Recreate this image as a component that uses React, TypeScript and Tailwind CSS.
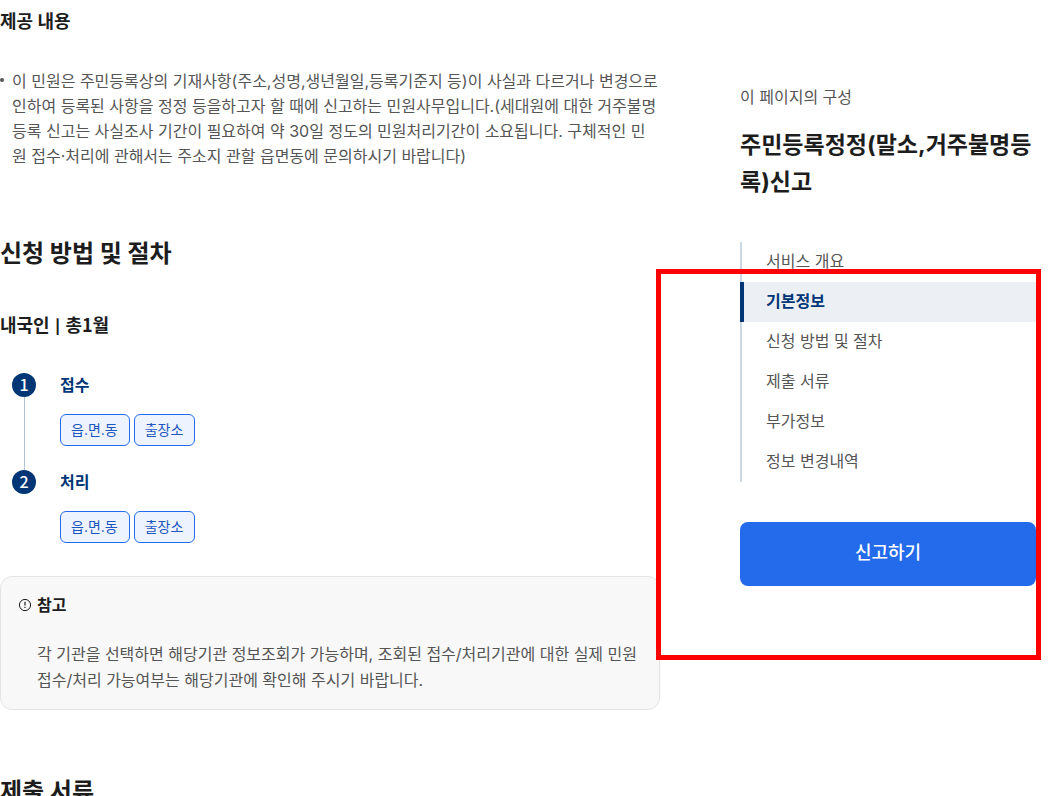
import clsx from "clsx";

type Step = { id: number; title: string; places: string[] };

const STEPS: Step[] = [
  { id: 1, title: "접수", places: ["읍.면.동", "출장소"] },
  { id: 2, title: "처리", places: ["읍.면.동", "출장소"] },
];

const SECTIONS = [
  "서비스 개요",
  "기본정보",
  "신청 방법 및 절차",
  "제출 서류",
  "부가정보",
  "정보 변경내역",
];

const ACTIVE_SECTION = "기본정보";

function InfoIcon() {
  return (
    <svg
      className="size-[14px] shrink-0"
      viewBox="0 0 14 14"
      fill="none"
      stroke="#1d1d1d"
      aria-hidden="true"
    >
      <circle cx="7" cy="7" r="5.6" strokeWidth="1" />
      <path d="M7 3.8v3.8" strokeWidth="1.2" />
      <path d="M7 8.7v1.3" strokeWidth="1.2" />
    </svg>
  );
}

function StepItem({ step, last }: { step: Step; last: boolean }) {
  return (
    <li className="flex gap-6">
      <div className="flex w-6 flex-col items-center">
        <span className="flex size-6 shrink-0 items-center justify-center rounded-full bg-[#003675] pb-0.5 font-['Noto_Sans_CJK_KR',sans-serif] text-base leading-none font-medium text-white">
          {step.id}
        </span>
        {!last && <span className="w-px flex-1 bg-[#b3c2d4]" />}
      </div>
      <div className={clsx(!last && "pb-6")}>
        <h4 className="text-base leading-6 font-bold text-[#003675]">
          {step.title}
        </h4>
        <div className="mt-[17px] flex gap-1">
          {step.places.map((place) => (
            <button
              key={place}
              type="button"
              className="h-8 rounded-md border border-[#246beb] bg-[#eef4ff] pr-[11px] pl-2.5 text-sm text-[#1d56bc]"
            >
              {place}
            </button>
          ))}
        </div>
      </div>
    </li>
  );
}

function SideNav() {
  return (
    <aside className="pt-[85px]">
      <p className="leading-6">이 페이지의 구성</p>
      <h2 className="mt-[18px] text-[23px] leading-[37px] font-bold break-all text-[#1d1d1d]">
        주민등록정정(말소,거주불명등록)신고
      </h2>
      <nav className="mt-[41px]" aria-label="이 페이지의 구성">
        <ul className="border-l-2 border-[#cdd7e4]">
          {SECTIONS.map((section) => (
            <li key={section}>
              <a
                href="#"
                className={clsx(
                  "block h-10 leading-[38px]",
                  section === ACTIVE_SECTION
                    ? "-ml-0.5 border-l-4 border-[#003675] bg-[#ecf0f5] pl-[22px] font-bold text-[#003675]"
                    : "pl-6"
                )}
              >
                {section}
              </a>
            </li>
          ))}
        </ul>
      </nav>
      <button
        type="button"
        className="mt-10 h-16 w-full rounded-lg bg-[#246beb] pb-0.5 text-lg font-medium text-white"
      >
        신고하기
      </button>
    </aside>
  );
}

export default function App() {
  return (
    <div className="relative h-screen overflow-hidden bg-white font-['Inter','Noto_Sans_CJK_KR',sans-serif] text-base text-[#555]">
      <div className="grid grid-cols-[minmax(0,1fr)_296px] gap-20 pr-[13px]">
        <main className="pt-2">
          <h3 className="text-lg leading-[27px] font-bold text-[#1d1d1d]">
            제공 내용
          </h3>
          <ul className="mt-[34px]">
            <li className="flex gap-2 leading-[25px] break-all">
              <span className="mt-[9px] size-1 shrink-0 rounded-full bg-[#555]" />
              이 민원은 주민등록상의 기재사항(주소,성명,생년월일,등록기준지 등)이
              사실과 다르거나 변경으로 인하여 등록된 사항을 정정 등을하고자 할
              때에 신고하는 민원사무입니다.(세대원에 대한 거주불명등록 신고는
              사실조사 기간이 필요하여 약 30일 정도의 민원처리기간이 소요됩니다.
              구체적인 민원 접수·처리에 관해서는 주소지 관할 읍면동에 문의하시기
              바랍니다)
            </li>
          </ul>

          <h2 className="mt-[67px] text-2xl leading-9 font-bold text-[#1d1d1d]">
            신청 방법 및 절차
          </h2>
          <h3 className="mt-10 text-lg leading-[27px] font-bold text-[#1d1d1d]">
            내국인 <span className="px-px text-sm leading-none">|</span> 총
            <span className="font-['Noto_Sans_CJK_KR',sans-serif] leading-none">
              1
            </span>
            월
          </h3>
          <ol className="mt-[34px] pl-3">
            {STEPS.map((step, i) => (
              <StepItem
                key={step.id}
                step={step}
                last={i === STEPS.length - 1}
              />
            ))}
          </ol>

          <section className="mt-[33px] rounded-xl border border-[#e4e4e4] bg-[#f8f8f8] px-[17px] py-4">
            <h4 className="flex items-center gap-[5px] leading-6 font-bold text-[#1d1d1d]">
              <InfoIcon />
              참고
            </h4>
            <p className="mt-6 pl-[19px] leading-[26px]">
              각 기관을 선택하면 해당기관 정보조회가 가능하며, 조회된
              접수/처리기관에 대한 실제 민원 접수/처리 가능여부는 해당기관에
              확인해 주시기 바랍니다.
            </p>
          </section>

          <h2 className="mt-16 text-2xl leading-9 font-bold text-[#1d1d1d]">
            제출 서류
          </h2>
        </main>
        <SideNav />
      </div>

      {/* Highlight frame over the side navigation */}
      <div className="pointer-events-none absolute top-[269px] right-2 h-[391px] w-[385px] border-5 border-[#ff0000]" />
    </div>
  );
}
